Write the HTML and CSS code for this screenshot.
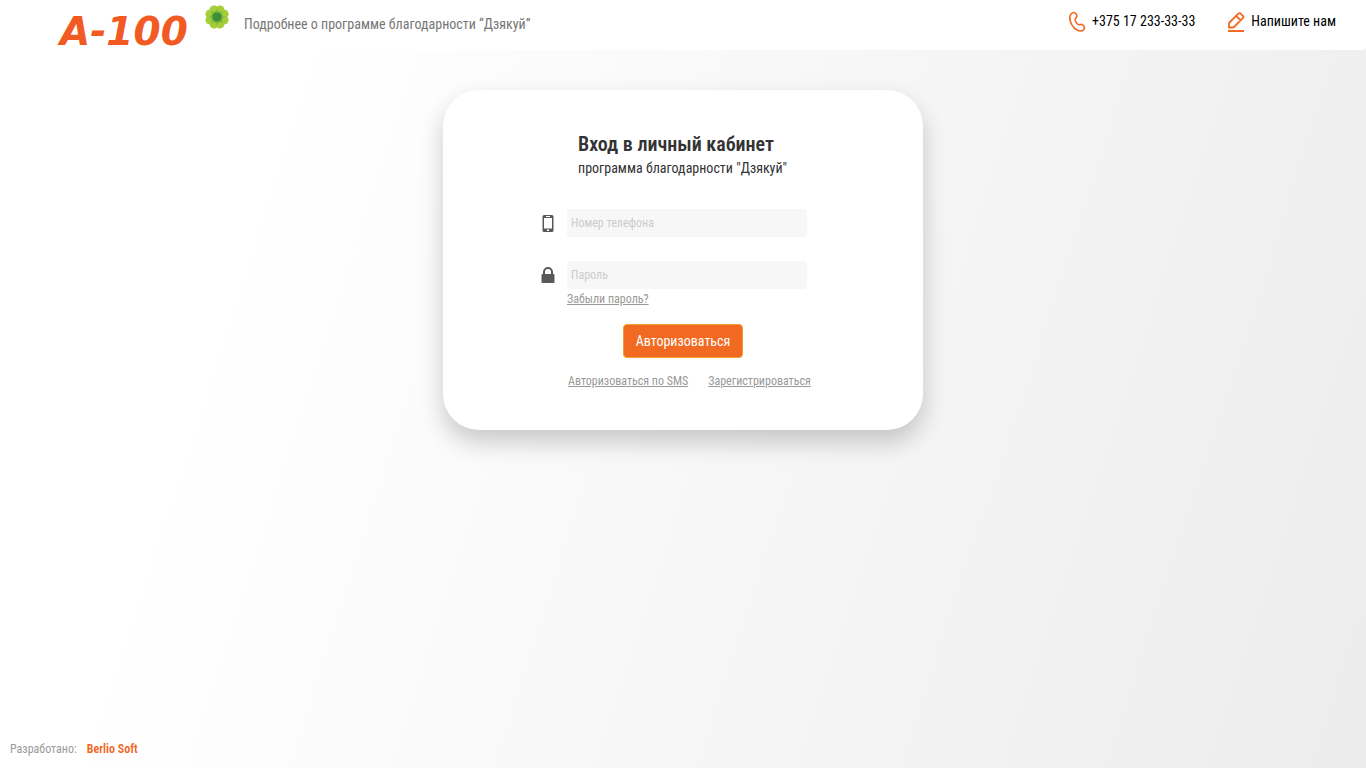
FILE: index.html
```html
<!DOCTYPE html>
<html lang="ru">
<head>
    <meta charset="UTF-8">
    <meta name="viewport" content="width=device-width, initial-scale=1">
    <title>Вход в личный кабинет</title>
    <link rel="stylesheet" href="styles.css">
</head>
<body>
<header class="header">
    <a class="logo" href="#">A-100</a>
    <a class="about" href="#">
        <svg class="flower" viewBox="0 0 26 26" aria-hidden="true">
            <g fill="#a6ce39">
                <path id="petals" d="M13 13L8 3Q9 .5 11 1.500L13 2.500L15 1.500Q17 .5 18 3zM13 13L8 23Q9 25.500 11 24.500L13 23.500L15 24.500Q17 25.500 18 23z"/>
                <use href="#petals" transform="rotate(45 13 13)"/>
                <use href="#petals" transform="rotate(90 13 13)"/>
                <use href="#petals" transform="rotate(135 13 13)"/>
            </g>
            <g fill="#6fb43f">
                <path id="rays" d="M13 4.500L16 9V17L13 21.500L10 17V9z" opacity=".6"/>
                <use href="#rays" transform="rotate(45 13 13)"/>
                <use href="#rays" transform="rotate(90 13 13)"/>
                <use href="#rays" transform="rotate(135 13 13)"/>
            </g>
            <path fill="#3f8f3a" d="M11 8.500h4l2.500 2.500v4l-2.500 2.500h-4L8.500 15v-4z"/>
        </svg>
        <span>Подробнее о программе благодарности “Дзякуй”</span>
    </a>
    <nav class="contacts">
        <a href="tel:+375172333333">
            <svg viewBox="0 0 17 22" width="17" height="22" fill="none" stroke="#f26a21" stroke-width="1.600" stroke-linejoin="round" aria-hidden="true">
                <path d="M2.500 2.500Q5 .3 7 2.800Q8.700 5.500 6.800 7.100C5.500 8.300 5.900 9.200 7 11.100C8.300 13.300 9.300 14.300 11 13.500Q13 12.800 14.800 15Q16.400 17.400 14 19.300C10.300 21.600 5.500 18.200 2.900 13.800C.5 9.500.2 5 2.500 2.500z"/>
            </svg>
            <span>+375 17 233-33-33</span>
        </a>
        <a href="#">
            <svg viewBox="0 0 18 22" width="18" height="22" fill="none" stroke="#f26a21" stroke-width="1.800" stroke-linejoin="round" aria-hidden="true">
                <path d="M2 16.500V12L11.300 2.700Q12.500 1.500 13.700 2.700L15.800 4.800Q17 6 15.800 7.200L6.500 16.500zM9.300 5L13.500 9.200"/>
                <path d="M1 20h16" stroke-width="2"/>
            </svg>
            <span>Напишите нам</span>
        </a>
    </nav>
</header>

<main class="main">
    <form class="card">
        <div class="heading">
            <h1>Вход в личный кабинет</h1>
            <p>программа благодарности "Дзякуй"</p>
        </div>

        <div class="field">
            <label for="phone" aria-label="Номер телефона">
                <svg viewBox="0 0 14 20" width="14" height="20" aria-hidden="true">
                    <path fill="#58595b" fill-rule="evenodd" d="M3 2h8Q12.500 2 12.500 3.500v14Q12.500 19 11 19h-8Q1.500 19 1.500 17.500v-14Q1.500 2 3 2zM3 5v10.500h8V5zM5 3v1h4V3zM6 16.500v1.500h2v-1.500z"/>
                </svg>
            </label>
            <input type="tel" id="phone" placeholder="Номер телефона">
        </div>
        <div class="field">
            <label for="password" aria-label="Пароль">
                <svg viewBox="0 0 14 20" width="14" height="20" aria-hidden="true">
                    <path fill="none" stroke="#58595b" stroke-width="2" d="M3 10V7a4 4 0 0 1 8 0v3"/>
                    <rect x=".5" y="9" width="13" height="9" rx="1" fill="#58595b"/>
                </svg>
            </label>
            <input type="password" id="password" placeholder="Пароль">
        </div>
        <a class="link forgot" href="#">Забыли пароль?</a>

        <button type="submit">Авторизоваться</button>

        <div class="links">
            <a class="link" href="#">Авторизоваться по SMS</a>
            <a class="link" href="#">Зарегистрироваться</a>
        </div>
    </form>
</main>

<footer class="footer">
    <span>Разработано:</span>
    <a href="#">Berlio Soft</a>
</footer>
</body>
</html>
```
FILE: styles.css
```css
*{box-sizing:border-box;}
body{margin:0;min-height:100vh;display:flex;flex-direction:column;font-family:"Roboto Condensed","Liberation Sans Narrow",Roboto,sans-serif;font-size:14px;line-height:20px;color:#333;background:linear-gradient(108deg,#fff 20%,#ececec 100%);}
a{color:inherit;text-decoration:none;}
svg{display:block;flex:none;}

.header{display:flex;align-items:flex-start;height:50px;padding:0 30px 0 60px;background:#fff;border-bottom-right-radius:4px;}
.logo{width:144px;padding-top:12px;font:italic bold 39px/40px "DejaVu Sans",sans-serif;color:#f15a22;white-space:nowrap;}
.about{display:flex;gap:14px;color:#777;}
.about span{padding-top:14px;}
.flower{width:26px;height:26px;margin-top:4px;}
.contacts{display:flex;gap:32px;margin-left:auto;padding-top:11px;color:#000;}
.contacts a{display:flex;gap:6px;}

.main{flex:1;padding:40px 16px;}
.card{display:flex;flex-direction:column;max-width:480px;margin:0 auto;padding:42px 96px 39px;background:#fff;border-radius:36px;box-shadow:0 12px 24px rgba(0,0,0,.2);}
.heading{margin:0 0 31px 39px;white-space:nowrap;}
h1{margin:0;font-size:20px;font-weight:600;line-height:24px;}
.heading p{margin:2px 0 0;}
.field{display:flex;align-items:center;gap:12px;margin-bottom:24px;}
.field + .field{margin-bottom:0;}
.field label{width:16px;padding-left:2px;}
.field input{flex:none;width:240px;height:28px;padding:0 4px;border:0;border-radius:4px;background:#f7f7f7;font:inherit;font-size:12px;color:#333;}
.field input::placeholder{color:#ccc;opacity:1;}
.link{font-size:12px;color:#999;text-decoration:underline;white-space:nowrap;}
.forgot{align-self:flex-start;margin-left:28px;}
button{align-self:center;height:34px;margin:15px 0 13px;padding:0 12px;border:1px solid #f0a030;border-radius:4px;background:#f26a21;font:inherit;color:#fff;cursor:pointer;}
.links{display:flex;gap:20px;margin-left:29px;}

.footer{display:flex;gap:10px;padding:0 10px 9px;font-size:12px;color:#999;}
.footer a{font-weight:600;color:#f26522;}
```
